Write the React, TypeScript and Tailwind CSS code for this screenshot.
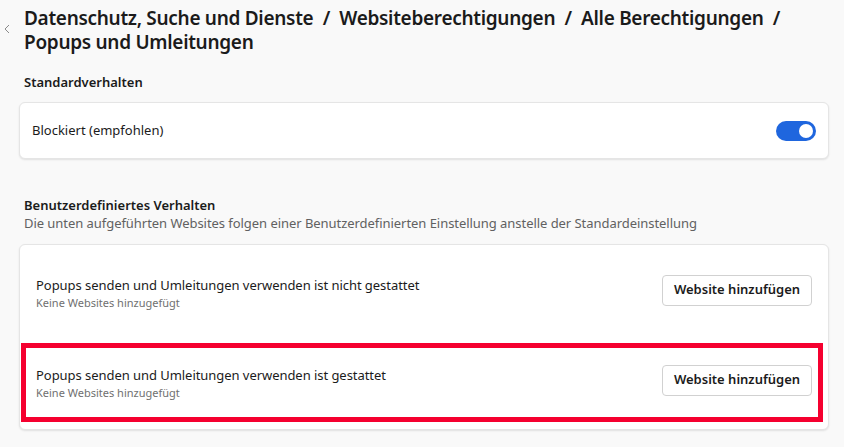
import React from "react";

const font = { fontFamily: '"Noto Sans", "Open Sans", Arial, sans-serif' };

function Toggle() {
  return (
    <div className="flex h-[20px] w-[40px] items-center justify-end rounded-full bg-[#1f66de] pr-[3px]">
      <div className="h-[14px] w-[14px] rounded-full bg-white" />
    </div>
  );
}

function SiteRow({ title, highlight }: { title: string; highlight?: boolean }) {
  return (
    <div className="relative flex h-[90px] items-center justify-between px-4">
      <div className="mt-[6px]">
        <div className="text-[13px] leading-5 tracking-[-0.05px] text-[#1b1b1b]">{title}</div>
        <div className="text-[11px] leading-4 text-[#707070]">Keine Websites hinzugefügt</div>
      </div>
      <button className="h-[31px] w-[150px] rounded-[4px] border border-[#d1d1d1] bg-white text-[13px] font-semibold text-[#1b1b1b]">
        Website hinzufügen
      </button>
      {highlight ? (
        <div className="pointer-events-none absolute left-[1px] top-[8px] h-[79px] w-[802px] border-[5px] border-[#f5002f]" />
      ) : null}
    </div>
  );
}

export default function App() {
  return (
    <div className="relative h-[447px] w-[844px] overflow-hidden bg-[#f9f9f9]" style={font}>
      <svg className="absolute left-[3px] top-[24px]" width="8" height="10" viewBox="0 0 8 10">
        <polyline points="6,1 2,5 6,9" fill="none" stroke="#8a8a8a" strokeWidth="1" />
      </svg>
      <div className="pl-[19px] pr-[15px] pt-[6px]">
        <h1 className="pl-[5px] text-[19px] font-semibold leading-6 tracking-[-0.3px] text-[#1b1b1b]">
          Datenschutz, Suche und Dienste&nbsp; /&nbsp; Websiteberechtigungen&nbsp; /&nbsp; Alle Berechtigungen&nbsp; /
          <br />
          Popups und Umleitungen
        </h1>

        <div className="mt-[18px] pl-[5px] text-[13px] font-semibold leading-5 text-[#1b1b1b]">Standardverhalten</div>
        <div className="mt-[10px] flex h-[57px] items-center justify-between rounded-[6px] border border-[#e5e5e5] bg-white px-3 shadow-[0_1px_2px_rgba(0,0,0,0.1)]">
          <span className="text-[13px] text-[#1b1b1b]">Blockiert (empfohlen)</span>
          <Toggle />
        </div>

        <div className="mt-[37px] pl-[5px] text-[13px] font-semibold leading-[18px] text-[#1b1b1b]">
          Benutzerdefiniertes Verhalten
        </div>
        <div className="pl-[5px] text-[13px] leading-[18px] tracking-[-0.05px] text-[#616161]">
          Die unten aufgeführten Websites folgen einer Benutzerdefinierten Einstellung anstelle der Standardeinstellung
        </div>

        <div className="mt-[12px] rounded-[6px] border border-[#e5e5e5] bg-white pb-1 shadow-[0_1px_2px_rgba(0,0,0,0.1)]">
          <SiteRow title="Popups senden und Umleitungen verwenden ist nicht gestattet" />
          <SiteRow title="Popups senden und Umleitungen verwenden ist gestattet" highlight />
        </div>
      </div>
    </div>
  );
}
